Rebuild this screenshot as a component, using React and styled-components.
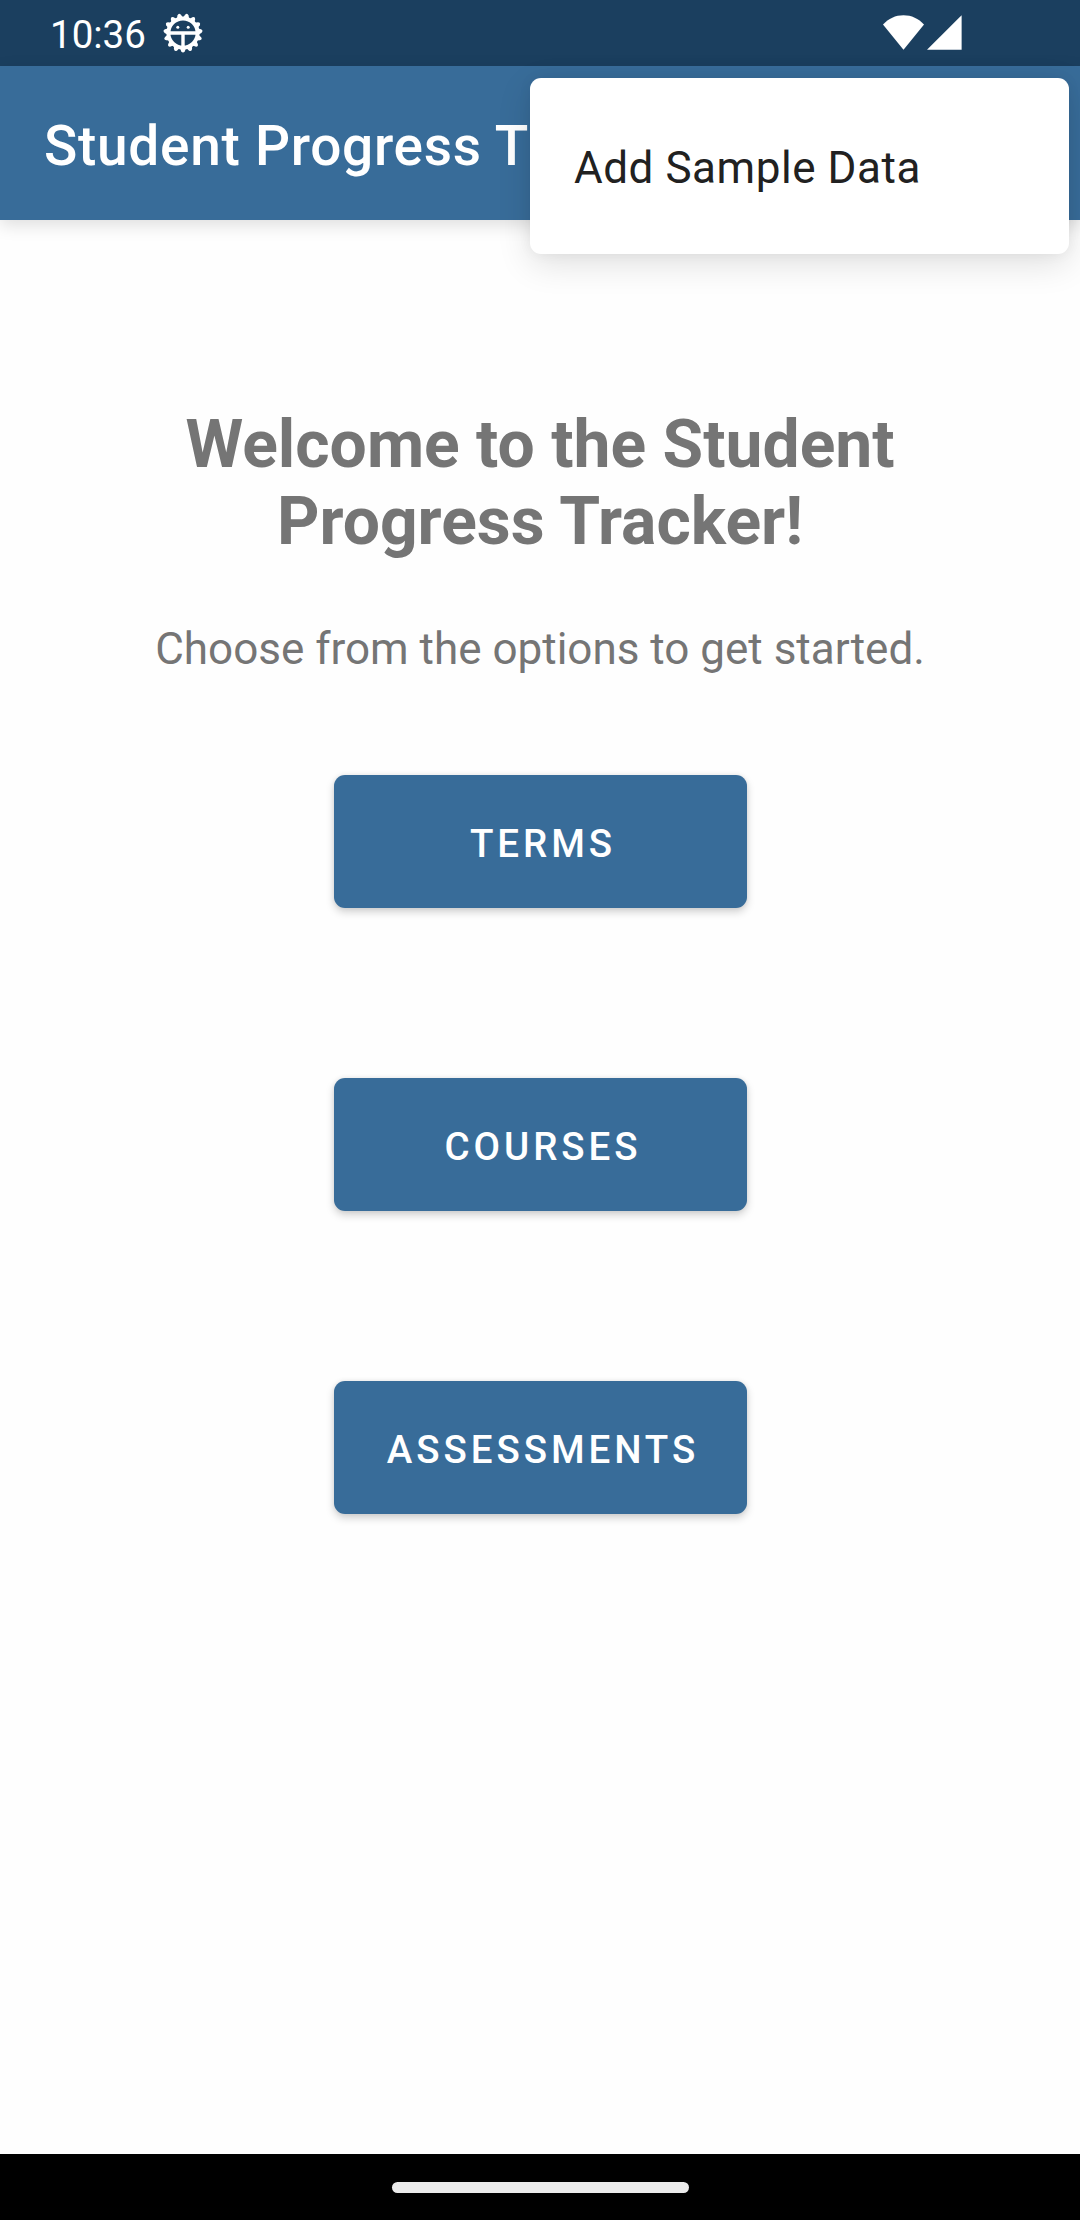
import React from "react";
import styled, { createGlobalStyle } from "styled-components";

const GlobalStyle = createGlobalStyle`
  *, *::before, *::after { box-sizing: border-box; }
  body {
    margin: 0;
    background: #fefefe;
    font-family: Roboto, "Noto Sans", sans-serif;
  }
`;

const Screen = styled.div`
  position: relative;
  display: flex;
  flex-direction: column;
  width: 1080px;
  height: 2220px;
  background: #fefefe;
  overflow: hidden;
`;

const StatusBar = styled.div`
  display: flex;
  align-items: center;
  justify-content: space-between;
  height: 66px;
  padding: 0 118px 0 50px;
  background: #1b3f5f;
  color: #fff;
`;

const StatusGroup = styled.div`
  display: flex;
  align-items: center;
  gap: ${(p) => p.$gap}px;
`;

const Clock = styled.span`
  padding-top: 3px;
  font-size: 38.5px;
  line-height: 45px;
`;

const StatusIcon = styled.svg`
  display: block;
  fill: #fff;
`;

const Toolbar = styled.header`
  display: flex;
  align-items: center;
  height: 154px;
  padding: 6px 44px 0;
  background: #386c99;
  color: #fff;
  box-shadow: 0 5px 16px rgba(0, 0, 0, 0.13);
`;

const Title = styled.h1`
  margin: 0;
  font-size: 55px;
  font-weight: 500;
  line-height: 66px;
  letter-spacing: 0.0128em;
  white-space: nowrap;
`;

const Content = styled.main`
  flex: 1;
  display: flex;
  flex-direction: column;
  align-items: center;
  padding-top: 186px;
  color: #757575;
`;

const Heading = styled.h2`
  width: 800px;
  margin: 0 0 63px;
  font-size: 66px;
  font-weight: 700;
  line-height: 77px;
  text-align: center;
`;

const Subtitle = styled.p`
  margin: 0 0 100px;
  font-size: 44px;
  line-height: 52px;
  white-space: nowrap;
`;

const ButtonStack = styled.div`
  display: flex;
  flex-direction: column;
  gap: 170px;
`;

const Button = styled.button`
  display: flex;
  align-items: center;
  justify-content: center;
  width: 413px;
  height: 133px;
  padding: 4px 0 0 6px;
  border: 0;
  border-radius: 11px;
  background: #386c99;
  color: #fff;
  font-family: inherit;
  font-size: 38.5px;
  font-weight: 500;
  line-height: 45px;
  letter-spacing: 0.102em;
  box-shadow: 0 4px 8px rgba(0, 0, 0, 0.18), 0 0 5px rgba(0, 0, 0, 0.07);
`;

const NavigationBar = styled.footer`
  display: flex;
  align-items: center;
  justify-content: center;
  height: 66px;
  background: #000;
`;

const HomeHandle = styled.div`
  width: 297px;
  height: 11px;
  border-radius: 6px;
  background: #ebebeb;
`;

const OverflowMenu = styled.div`
  position: absolute;
  top: 78px;
  right: 11px;
  display: flex;
  align-items: center;
  width: 539px;
  height: 176px;
  padding: 4px 44px 0;
  border-radius: 11px;
  background: #fff;
  box-shadow: 0 10px 34px rgba(0, 0, 0, 0.12), 0 0 14px rgba(0, 0, 0, 0.05);
`;

const MenuItem = styled.span`
  color: #212121;
  font-size: 44px;
  line-height: 52px;
  letter-spacing: 0.0125em;
  white-space: nowrap;
`;

const teeth = Array.from({ length: 15 }, (_, i) => 12 + i * 24);

function DebugIcon() {
  return (
    <StatusIcon width="40" height="40" viewBox="0 0 40 40">
      <circle cx="20" cy="20" r="14.6" fill="none" stroke="#fff" strokeWidth="4" />
      {teeth.map((angle) => (
        <path
          key={angle}
          d="M16.8 5.2 L18.2 1.7 Q20 -0.9 21.8 1.7 L23.2 5.2 Z"
          transform={`rotate(${angle} 20 20)`}
        />
      ))}
      <path d="M6 18.3H34V21.7H21.7V34H18.3V21.7H6Z" />
      <circle cx="14.8" cy="14.3" r="1.5" />
      <circle cx="25.2" cy="14.3" r="1.5" />
    </StatusIcon>
  );
}

function WifiIcon() {
  return (
    <StatusIcon width="41" height="36" viewBox="0 0 41 36">
      <path d="M20.5 34.7 L0 9.5 C5.5 3.5 12.5 0.2 20.5 0.2 S35.5 3.5 41 9.5 Z" />
    </StatusIcon>
  );
}

function SignalIcon() {
  return (
    <StatusIcon width="35" height="36" viewBox="0 0 35 36">
      <path d="M34.6 0.3V34.8H0Z" />
    </StatusIcon>
  );
}

const sections = ["TERMS", "COURSES", "ASSESSMENTS"];

export default function App() {
  return (
    <>
      <GlobalStyle />
      <Screen>
        <StatusBar>
          <StatusGroup $gap={17}>
            <Clock>10:36</Clock>
            <DebugIcon />
          </StatusGroup>
          <StatusGroup $gap={3}>
            <WifiIcon />
            <SignalIcon />
          </StatusGroup>
        </StatusBar>
        <Toolbar>
          <Title>Student Progress Tracker</Title>
        </Toolbar>
        <Content>
          <Heading>Welcome to the Student Progress Tracker!</Heading>
          <Subtitle>Choose from the options to get started.</Subtitle>
          <ButtonStack>
            {sections.map((name) => (
              <Button key={name}>{name}</Button>
            ))}
          </ButtonStack>
        </Content>
        <NavigationBar>
          <HomeHandle />
        </NavigationBar>
        <OverflowMenu>
          <MenuItem>Add Sample Data</MenuItem>
        </OverflowMenu>
      </Screen>
    </>
  );
}
